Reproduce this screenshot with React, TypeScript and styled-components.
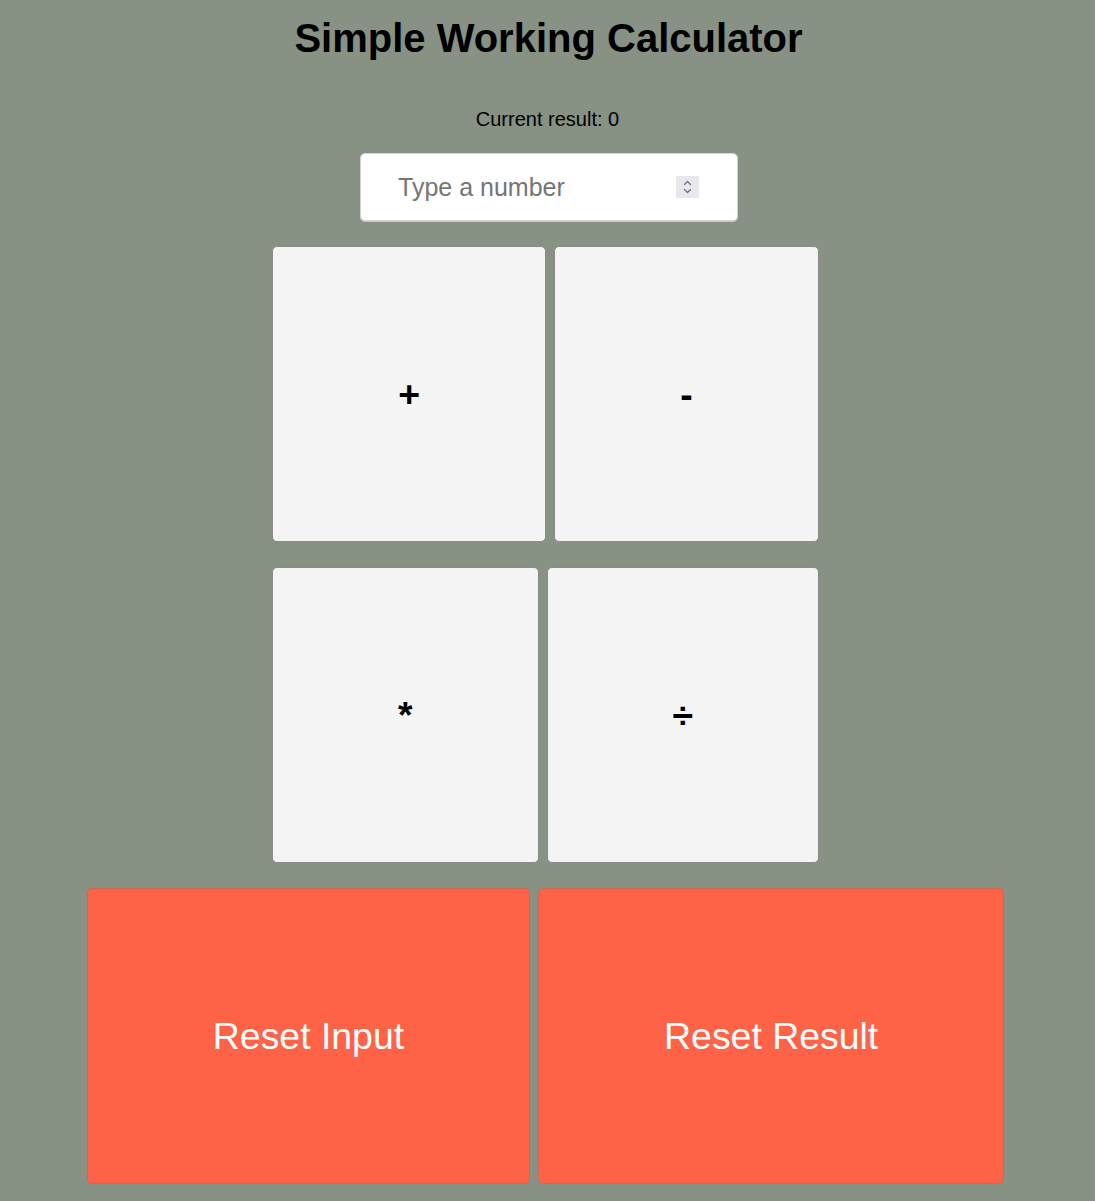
import React, { useState } from "react";
import styled, { createGlobalStyle } from "styled-components";

const GlobalStyle = createGlobalStyle`
  html, body {
    margin: 0;
    padding: 0;
    background: #879284;
  }
  body {
    font-family: "Liberation Sans", Arial, sans-serif;
    color: #000;
  }
`;

const Page = styled.main`
  display: flex;
  flex-direction: column;
  align-items: center;
  padding: 15px 0 16px;
  box-sizing: border-box;
  min-height: 1201px;
`;

const Title = styled.h1`
  margin: 0;
  font-size: 40px;
  font-weight: 700;
  line-height: 46px;
  padding-left: 2px;
`;

const Result = styled.p`
  margin: 47px 0 0;
  font-size: 20px;
  line-height: 23px;
`;

const NumberField = styled.label`
  margin-top: 22px;
  margin-left: 3px;
  width: 378px;
  height: 68px;
  box-sizing: border-box;
  display: flex;
  align-items: center;
  gap: 8px;
  padding: 0 38px 0 37px;
  background: #fff;
  border: 1px solid #d2d2d2;
  border-radius: 5px;
  box-shadow: 0 1px 0 #c9c9c9;
`;

const NumberInput = styled.input`
  flex: 1;
  min-width: 0;
  border: none;
  outline: none;
  background: transparent;
  padding: 0;
  font-family: "Liberation Sans", Arial, sans-serif;
  font-size: 25px;
  color: #000;
  &::placeholder {
    color: #757575;
  }
`;

const Spinner = styled.span`
  width: 23px;
  height: 22px;
  flex: none;
  background: #e8e7ee;
  display: flex;
  align-items: center;
  justify-content: center;
`;

const ButtonRow = styled.div`
  display: flex;
  justify-content: center;
  gap: 8px;
  margin-top: 25px;
  padding-right: 4px;
`;

const CalcButton = styled.button<{ $variant?: "op" | "reset" }>`
  padding: 125px;
  font-family: "Liberation Sans", Arial, sans-serif;
  font-size: 37.4px;
  font-weight: ${(p) => (p.$variant === "reset" ? 400 : 700)};
  line-height: 44px;
  border-radius: 5px;
  cursor: pointer;
  background: ${(p) => (p.$variant === "reset" ? "#ff6347" : "#f4f4f4")};
  color: ${(p) => (p.$variant === "reset" ? "#ffffff" : "#000000")};
  border: 1px solid ${(p) => (p.$variant === "reset" ? "#c86a58" : "#8a8a8a")};
`;

export default function App() {
  const [value, setValue] = useState("");
  const [result, setResult] = useState(0);
  const n = Number(value) || 0;

  return (
    <>
      <GlobalStyle />
      <Page>
        <Title>Simple Working Calculator</Title>
        <Result>Current result: {result}</Result>
        <NumberField>
          <NumberInput
            type="text"
            inputMode="decimal"
            placeholder="Type a number"
            value={value}
            onChange={(e) => setValue(e.target.value)}
          />
          <Spinner>
            <svg width="11" height="16" viewBox="0 0 11 16" fill="none" stroke="#6f6f6f" strokeWidth="1.2" strokeLinecap="round" strokeLinejoin="round">
              <path d="M2.5 5.5 L5.5 2.5 L8.5 5.5" />
              <path d="M2.5 10.5 L5.5 13.5 L8.5 10.5" />
            </svg>
          </Spinner>
        </NumberField>
        <ButtonRow>
          <CalcButton onClick={() => setResult(result + n)}>+</CalcButton>
          <CalcButton onClick={() => setResult(result - n)}>-</CalcButton>
        </ButtonRow>
        <ButtonRow>
          <CalcButton onClick={() => setResult(result * n)}>*</CalcButton>
          <CalcButton onClick={() => n !== 0 && setResult(result / n)}>÷</CalcButton>
        </ButtonRow>
        <ButtonRow>
          <CalcButton $variant="reset" onClick={() => setValue("")}>Reset Input</CalcButton>
          <CalcButton $variant="reset" onClick={() => setResult(0)}>Reset Result</CalcButton>
        </ButtonRow>
      </Page>
    </>
  );
}
